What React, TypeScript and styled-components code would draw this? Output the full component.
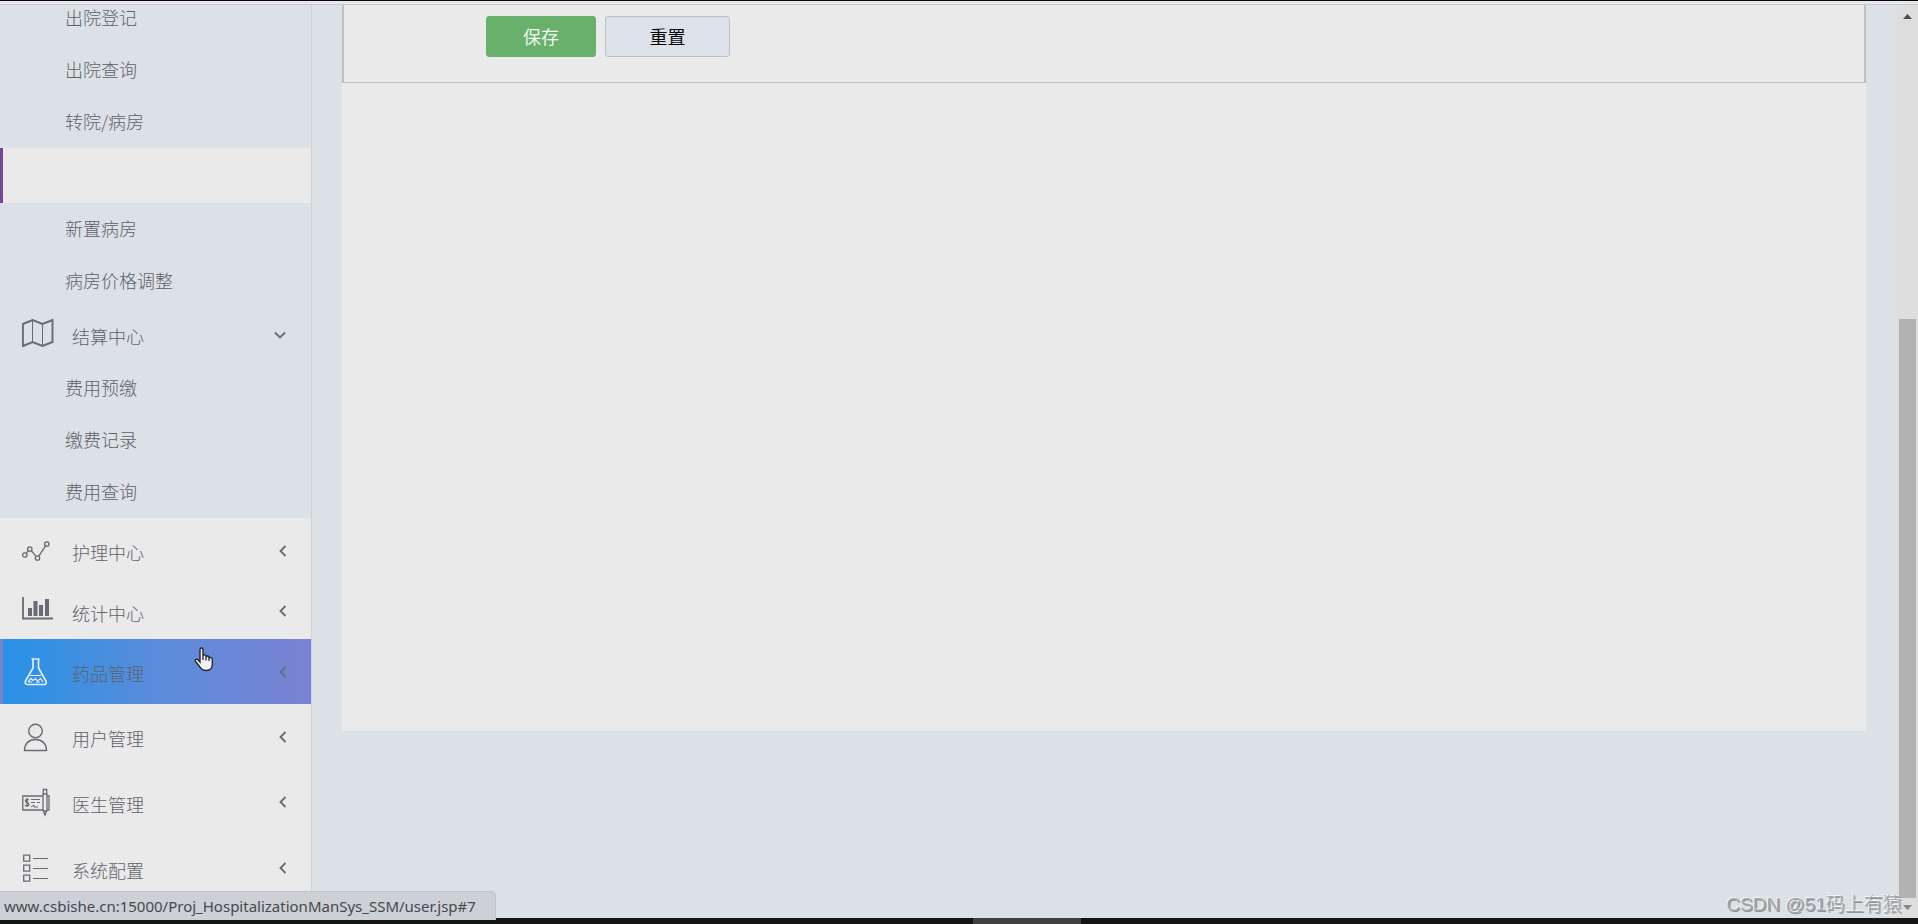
import React from "react";
import styled, { createGlobalStyle, css } from "styled-components";

const GlobalStyle = createGlobalStyle`
  *, *::before, *::after { box-sizing: border-box; }
  body {
    margin: 0;
    overflow: hidden;
    background: #dce1e5;
    color: #5f626b;
    font-family: "Noto Sans", "Noto Sans CJK SC", sans-serif;
    font-size: 18px;
  }
  ul { list-style: none; margin: 0; padding: 0; }
`;

const Screen = styled.div`
  position: relative;
  display: flex;
  flex-direction: column;
  height: 100vh;
  overflow: hidden;
`;

const BrowserEdge = styled.div`
  flex: none;
  height: 5px;
  background: #e8e7ec;
  border-top: 1px solid #0b0710;
  border-bottom: 1px solid #cccdd0;
`;

const Viewport = styled.div`
  display: flex;
  flex: 1;
  min-height: 0;
`;

const Sidebar = styled.nav`
  flex: none;
  width: 312px;
  overflow: hidden;
  background: #eaeaea;
  border-right: 1px solid #cdd2d6;
`;

const ScrolledMenu = styled.ul`
  margin-top: -13px;
`;

const OpenGroup = styled.li`
  background: #dce1e5;
`;

const SubLink = styled.a`
  display: flex;
  align-items: center;
  height: 52px;
  padding: 0 0 2px 65px;
  color: inherit;
  font-family: "Noto Sans CJK SC", sans-serif;
  font-weight: 300;
  line-height: 26px;
  text-decoration: none;
`;

const ActiveRow = styled.div`
  height: 55px;
  background: #eaeaea;
  border-left: 3px solid #764690;
`;

const MenuLink = styled.a<{ $height: number; $hovered?: boolean }>`
  display: flex;
  align-items: center;
  height: ${(p) => p.$height}px;
  padding: 0 23px 0 22px;
  color: inherit;
  text-decoration: none;
  ${(p) =>
    p.$hovered &&
    css`
      padding-left: 19px;
      border-left: 3px solid #7d80cc;
      background: linear-gradient(90deg, #2792e6, #5a8cdb 50%, #7b82d3);
    `}
`;

const MenuLabel = styled.span`
  flex: 1;
  padding: 3px 0 0 18px;
  font-family: "Noto Sans CJK SC", sans-serif;
  font-weight: 300;
  line-height: 26px;
`;

const Icon = styled.svg`
  flex: none;
  width: 32px;
  height: 32px;
  fill: none;
  stroke: #686b73;
`;

const Chevron = styled.svg<{ $open?: boolean }>`
  flex: none;
  width: 10px;
  height: 10px;
  margin-right: ${(p) => (p.$open ? 3 : 0)}px;
  fill: none;
  stroke: #666a72;
  stroke-width: 1.8;
  overflow: visible;
`;

const Main = styled.main`
  display: flex;
  flex: 1;
  min-width: 0;
  padding: 0 31px 187px 30px;
  background: #dce1e5;
`;

const Card = styled.section`
  flex: 1;
  background: #eaeaea;
`;

const FormFooter = styled.form`
  display: flex;
  gap: 9px;
  height: 78px;
  padding: 11px 0 0 142px;
  border: 2px solid #b8c2c9;
  border-top: 0;
  border-bottom-width: 1px;
`;

const FormButton = styled.button<{ $primary?: boolean }>`
  width: ${(p) => (p.$primary ? 110 : 125)}px;
  height: 41px;
  padding: 0 0 2px;
  border: 1px solid ${(p) => (p.$primary ? "#68b06c" : "#b6c3cf")};
  border-radius: 3px;
  background: ${(p) => (p.$primary ? "#68b06c" : "#dce2e7")};
  color: ${(p) => (p.$primary ? "#f2f5f0" : "#08080c")};
  font: 18px/26px "Noto Sans CJK SC", sans-serif;
`;

const Scrollbar = styled.div`
  display: flex;
  flex: none;
  flex-direction: column;
  align-items: center;
  width: 21px;
  background: #dedede;
`;

const ArrowBox = styled.svg`
  flex: none;
  width: 19px;
  height: 20px;
`;

const Track = styled.div`
  display: flex;
  flex: 1;
  flex-direction: column;
  justify-content: flex-end;
`;

const Thumb = styled.div`
  width: 17px;
  height: 66.3%;
  background: #b2b2b2;
`;

const Taskbar = styled.div`
  display: flex;
  flex: none;
  justify-content: center;
  height: 6px;
  padding-left: 136px;
  background: #141414;
`;

const TaskbarWindow = styled.div`
  width: 108px;
  background: #404040;
`;

const StatusBubble = styled.div`
  position: absolute;
  bottom: 4px;
  left: 0;
  height: 29px;
  padding: 0 19px 0 4px;
  border-top: 1px solid #bfc3c7;
  border-right: 1px solid #bfc3c7;
  border-radius: 0 5px 0 0;
  background: #cdd0d4;
  color: #45484e;
  font-family: "Noto Sans", sans-serif;
  font-size: 15px;
  line-height: 28px;
  white-space: nowrap;
`;

const Watermark = styled.div`
  position: absolute;
  right: 16px;
  bottom: 6px;
  color: #a3a5a8;
  font-family: "Liberation Sans", "Noto Sans CJK SC", sans-serif;
  font-size: 19px;
  font-weight: 300;
  line-height: 26px;
  text-shadow: -1px -1px 0 #f4f5f6, 1px 1px 0 #909295;
`;

const Cursor = styled.svg`
  position: absolute;
  top: 647px;
  left: 194px;
  width: 20px;
  height: 25px;
`;

const MapIcon = () => (
  <Icon viewBox="0 0 32 32" strokeWidth="1.9">
    <path d="M.9 5 10.500 1 20.500 5 30.500 1V23L20.500 27 10.500 23 .9 27Z" />
    <path d="M10.500 1V23M20.500 5V27" strokeWidth="1" />
  </Icon>
);

const TrendIcon = () => (
  <Icon viewBox="0 0 32 32" strokeWidth="1.3">
    <circle cx="2.8" cy="20" r="2.2" />
    <circle cx="7.8" cy="14" r="2.2" />
    <circle cx="15.5" cy="23" r="2.2" />
    <circle cx="24.8" cy="9" r="2.2" />
    <path d="M4.2 18.3 6.4 15.7M9.3 15.7 14 21.3M16.8 21.2 23.6 10.8" />
  </Icon>
);

const BarsIcon = () => (
  <Icon viewBox="0 0 32 32">
    <path d="M1 2V23.500H31" strokeWidth="1.8" />
    <path d="M6 13h4v8H6zM11.500 6h4v15h-4zM17 10h4v11h-4zM23 4h4v17h-4z" fill="#686b73" stroke="none" />
  </Icon>
);

const FlaskIcon = () => (
  <Icon viewBox="0 0 32 32" strokeWidth="1.7" style={{ stroke: "#e6eefa" }}>
    <path d="M9.500 3h8M11 3v9L3.500 25Q2.300 28.500 6 28.500H22Q25.200 28.500 24 25L16.500 12V3" />
    <path d="M8 19.500h11" strokeWidth="1" />
    <path d="M6 26l3-3.500 2 2 2.500-2 2 2.500 3-2.500 2.500 3.500M7 26h3M14 26h4" strokeWidth="1.2" />
  </Icon>
);

const PersonIcon = () => (
  <Icon viewBox="0 0 32 32" strokeWidth="1.4">
    <circle cx="13.5" cy="10" r="6.8" />
    <path d="M2.500 29.500C2.500 22.500 7 18.500 13.500 18.500S24.500 22.500 24.500 29.500Z" />
  </Icon>
);

const ChequeIcon = () => (
  <Icon viewBox="0 0 32 32" strokeWidth="1.3">
    <path d="M21 10H.8V24H21M25 10h2V24h-2" />
    <path d="M21 8h4V24l-2 5-2-5ZM21.300 3.500h3.400V8h-3.400ZM21.500 25h3" />
    <path d="M6.800 14.200C6 13 3.500 13.200 3.500 15S7 16.500 7 18.500 3.600 20 3 19M5 12v9" />
    <path d="M9 13.500h9M9 16.500h4M15 16.500h3M9 21l3-2v2h4" strokeWidth="1" />
  </Icon>
);

const ListIcon = () => (
  <Icon viewBox="0 0 32 32" strokeWidth="1.3">
    <path d="M1.700 3.200h6v6h-6zM1.700 13.200h6v6h-6zM1.700 23.200h6v6h-6z" />
    <path d="M11 6.500h15M11 16.500h15M11 26.500h15" strokeWidth="1" />
  </Icon>
);

const ChevronLeft = () => (
  <Chevron viewBox="0 0 10 10">
    <path d="M7.500 0 2.500 5l5 5" />
  </Chevron>
);

const SubItem = ({ label }: { label: string }) => (
  <li>
    <SubLink href="#">{label}</SubLink>
  </li>
);

const closedMenus = [
  { label: "护理中心", icon: <TrendIcon />, height: 65 },
  { label: "统计中心", icon: <BarsIcon />, height: 56 },
  { label: "药品管理", icon: <FlaskIcon />, height: 65, hovered: true },
  { label: "用户管理", icon: <PersonIcon />, height: 65 },
  { label: "医生管理", icon: <ChequeIcon />, height: 66 },
  { label: "系统配置", icon: <ListIcon />, height: 66 },
];

export default function App() {
  return (
    <Screen>
      <GlobalStyle />
      <BrowserEdge />
      <Viewport>
        <Sidebar>
          <ScrolledMenu>
            <OpenGroup>
              <ul>
                {["出院登记", "出院查询", "转院/病房"].map((t) => (
                  <SubItem key={t} label={t} />
                ))}
              </ul>
              <ActiveRow />
              <ul>
                {["新置病房", "病房价格调整"].map((t) => (
                  <SubItem key={t} label={t} />
                ))}
              </ul>
            </OpenGroup>
            <OpenGroup>
              <MenuLink href="#" $height={55}>
                <MapIcon />
                <MenuLabel>结算中心</MenuLabel>
                <Chevron viewBox="0 0 10 10" $open>
                  <path d="M0 2.500 5 7.500l5-5" />
                </Chevron>
              </MenuLink>
              <ul>
                {["费用预缴", "缴费记录", "费用查询"].map((t) => (
                  <SubItem key={t} label={t} />
                ))}
              </ul>
            </OpenGroup>
            {closedMenus.map((m) => (
              <li key={m.label}>
                <MenuLink href="#" $height={m.height} $hovered={m.hovered}>
                  {m.icon}
                  <MenuLabel>{m.label}</MenuLabel>
                  <ChevronLeft />
                </MenuLink>
              </li>
            ))}
          </ScrolledMenu>
        </Sidebar>
        <Main>
          <Card>
            <FormFooter>
              <FormButton type="button" $primary>
                保存
              </FormButton>
              <FormButton type="reset">重置</FormButton>
            </FormFooter>
          </Card>
        </Main>
        <Scrollbar>
          <ArrowBox viewBox="0 0 19 20">
            <path d="M5 14 9.500 9 14 14Z" fill="#4e4e4e" />
          </ArrowBox>
          <Track>
            <Thumb />
          </Track>
          <ArrowBox viewBox="0 0 19 20">
            <path d="M5 7h9l-4.500 5Z" fill="#858585" />
          </ArrowBox>
        </Scrollbar>
      </Viewport>
      <Taskbar>
        <TaskbarWindow />
      </Taskbar>
      <StatusBubble>www.csbishe.cn:15000/Proj_HospitalizationManSys_SSM/user.jsp#7</StatusBubble>
      <Watermark>CSDN @51码上有猿</Watermark>
      <Cursor viewBox="0 0 20 25">
        <path
          d="M6 2.500C6 .5 9 .5 9 2.500V9C9 7.500 12 7.300 12 9v1C12.300 8.500 15 8.700 15 10.300v1C15.500 10 18.300 10.300 18.300 12.500V17C18.300 21 16 23.500 12 23.500 8.500 23.500 6.500 21.500 5 18.500L1.500 14.500C.5 12.800 2.500 11.500 4 12.800L6 15Z"
          fill="#f1f1f1"
          stroke="#1c1e26"
          strokeWidth="1.300"
        />
        <path d="M9 9v4M12 10v3.500M15 11v3" stroke="#1c1e26" strokeWidth="1.200" />
      </Cursor>
    </Screen>
  );
}
